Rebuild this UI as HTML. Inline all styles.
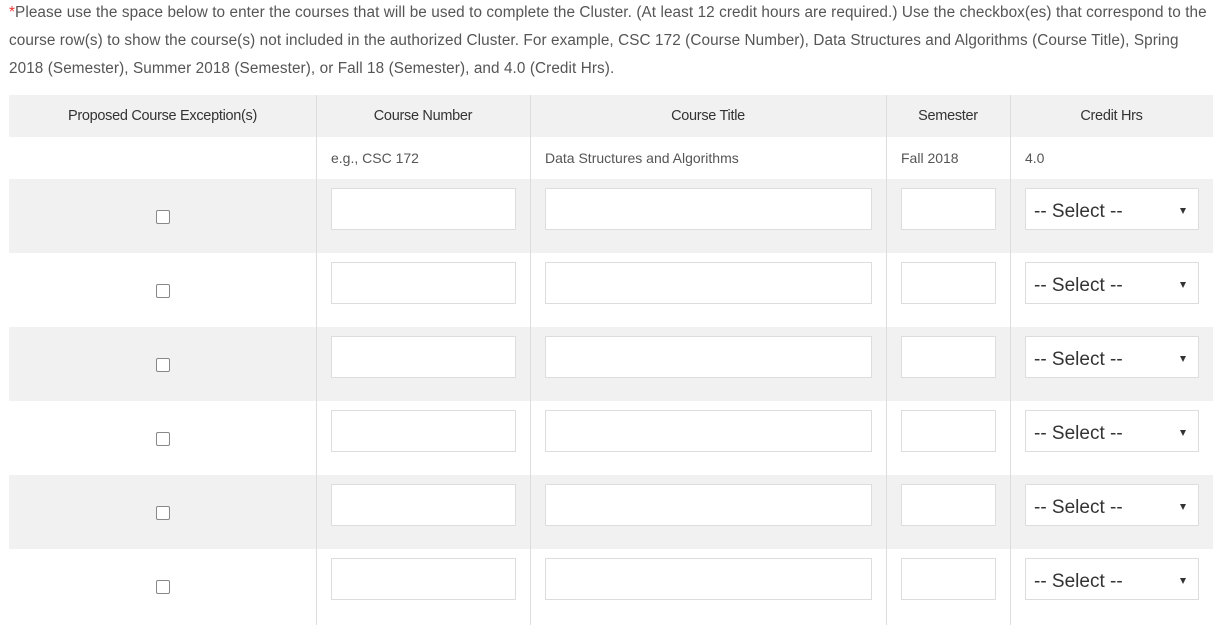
<!DOCTYPE html>
<html><head><style>
body{margin:0;width:1222px;height:632px;background:#fff;font-family:"Liberation Sans",sans-serif;color:#555;overflow:hidden;position:relative}
.intro{position:absolute;left:9px;top:-1px;width:1220px;font-size:15.3px;line-height:28px;color:#555;letter-spacing:0.09px;white-space:nowrap}
.intro span{color:#e33}
.row{position:absolute;left:9px;width:1204px}
.g{background:#f1f1f1}
.vl{position:absolute;top:95px;height:530px;width:1px;background:#ddd}
.h{position:absolute;top:95px;height:42px;line-height:42px;font-size:14.5px;color:#333;text-align:center;letter-spacing:-0.3px}
.ex{position:absolute;top:137px;height:42px;line-height:42px;font-size:14px;color:#555}
.in{position:absolute;height:40px;background:#fff;border:1px solid #ddd}
.sel{position:absolute;background:#fff;border:1px solid #ddd;font-size:19px;line-height:45px;color:#333;box-sizing:border-box;padding-left:8px;left:1025px;width:174px;height:42px}
.sel:after{content:"";position:absolute;right:12px;top:19px;border-left:3.5px solid transparent;border-right:3.5px solid transparent;border-top:6px solid #333}
.cb{position:absolute;left:156px;width:12px;height:12px;border:1px solid #888;border-radius:2px;background:#fff}
</style></head><body>
<div class="intro"><span>*</span>Please use the space below to enter the courses that will be used to complete the Cluster. (At least 12 credit hours are required.) Use the checkbox(es) that correspond to the<br>course row(s) to show the course(s) not included in the authorized Cluster. For example, CSC 172 (Course Number), Data Structures and Algorithms (Course Title), Spring<br>2018 (Semester), Summer 2018 (Semester), or Fall 18 (Semester), and 4.0 (Credit Hrs).</div>
<div class="row g" style="top:95px;height:42px"></div>
<div class="row g" style="top:179px;height:74px"></div>
<div class="row g" style="top:327px;height:74px"></div>
<div class="row g" style="top:475px;height:74px"></div>
<div class="vl" style="left:316px"></div><div class="vl" style="left:530px"></div><div class="vl" style="left:886px"></div><div class="vl" style="left:1010px"></div>
<div class="h" style="left:9px;width:307px">Proposed Course Exception(s)</div>
<div class="h" style="left:316px;width:214px">Course Number</div>
<div class="h" style="left:530px;width:356px">Course Title</div>
<div class="h" style="left:886px;width:124px">Semester</div>
<div class="h" style="left:1010px;width:203px">Credit Hrs</div>
<div class="ex" style="left:331px">e.g., CSC 172</div>
<div class="ex" style="left:545px">Data Structures and Algorithms</div>
<div class="ex" style="left:901px">Fall 2018</div>
<div class="ex" style="left:1025px">4.0</div>
<div id="rows"></div>
<script>
var h='';for(var i=0;i<6;i++){var t=188+74*i;
h+='<div class="cb" style="top:'+(t+22)+'px"></div>';
h+='<div class="in" style="top:'+t+'px;left:331px;width:183px"></div>';
h+='<div class="in" style="top:'+t+'px;left:545px;width:325px"></div>';
h+='<div class="in" style="top:'+t+'px;left:901px;width:93px"></div>';
h+='<div class="sel" style="top:'+t+'px">-- Select --</div>';}
document.getElementById('rows').innerHTML=h;
</script>
</body></html>
